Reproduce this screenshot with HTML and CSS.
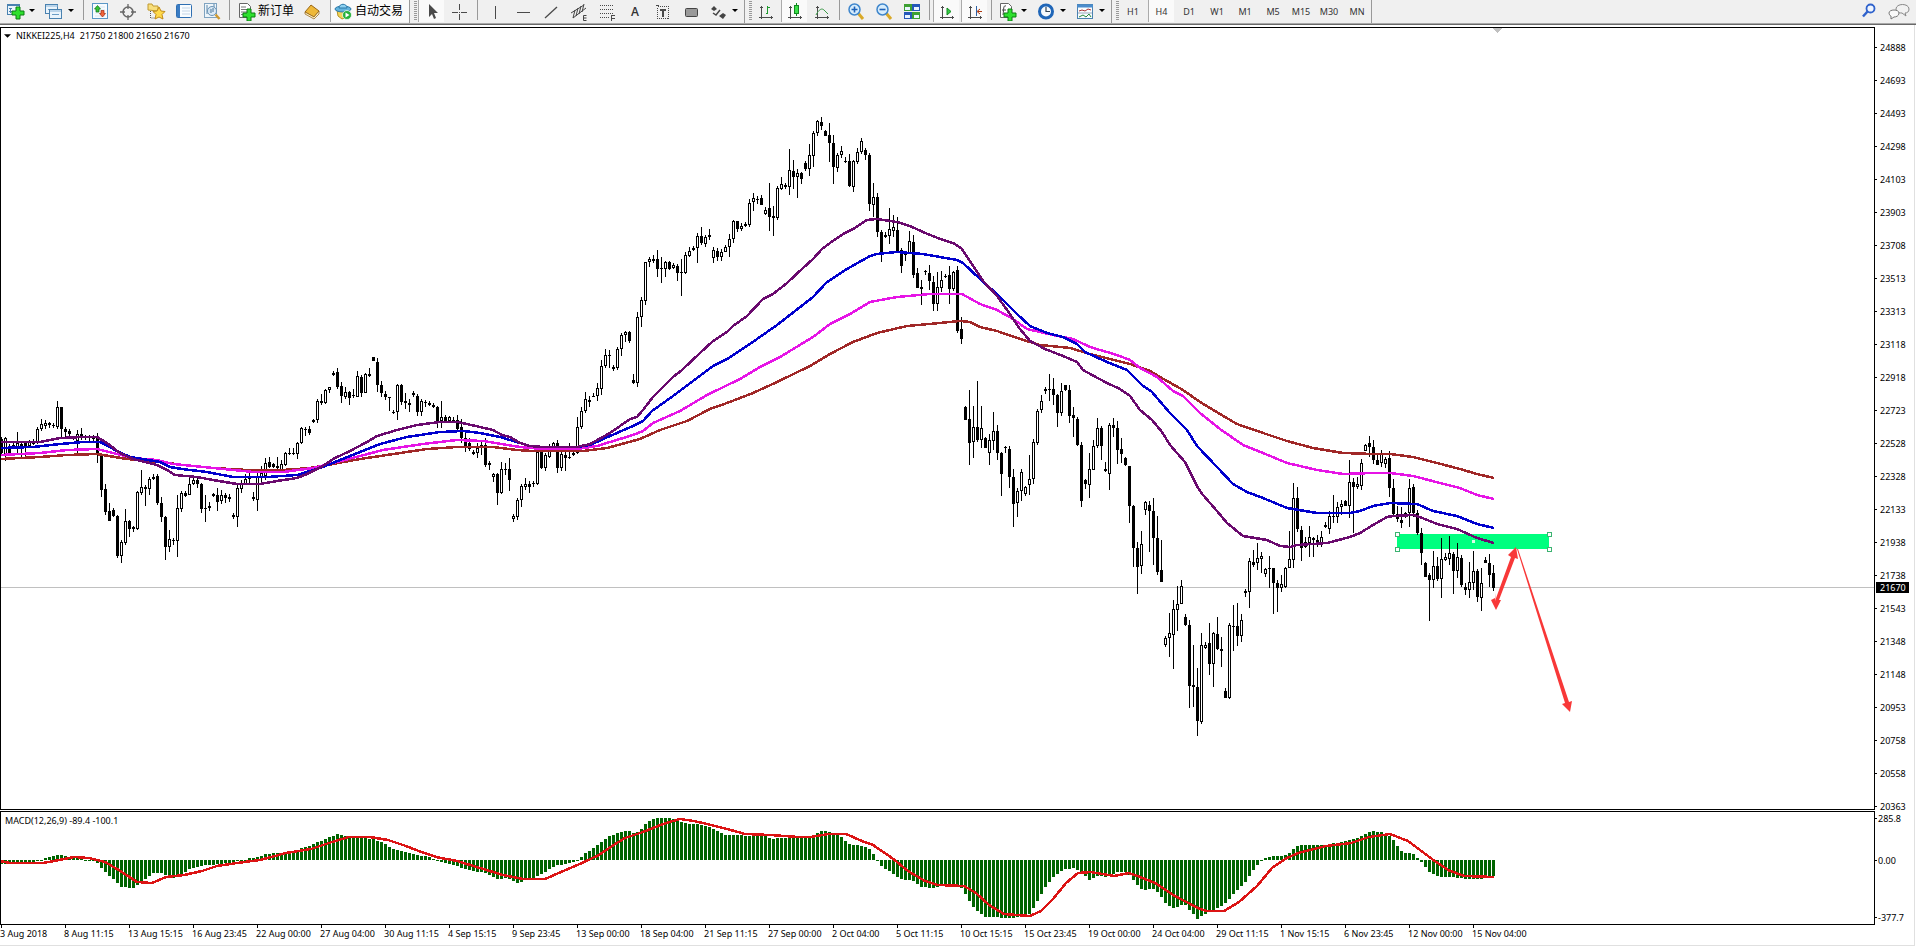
FILE: index.html
```html
<!DOCTYPE html>
<html lang="zh-CN">
<head>
  <meta charset="UTF-8" />
  <meta name="viewport" content="width=device-width, initial-scale=1.0" />
  <title>NIKKEI225,H4</title>
  <link rel="stylesheet" href="styles.css">
</head>
<body>
  <header class="toolbar">
    <div class="group">
      <button class="btn drop" aria-label="New chart">
        <svg class="icon" viewBox="0 0 20 20"><rect x="2.500" y="3.500" width="12" height="10" fill="#eaf4fc" stroke="#4a82b0"/><path d="M2 4.500h13" stroke="#4a82b0"/><path d="M5.500 7v5M4 10.500h4M4 7.500h3" stroke="#4a82b0" fill="none"/><path d="M11 6h4v4h4v4h-4v4h-4v-4H7v-4h4z" fill="#2ee02e" stroke="#0a7d12"/></svg>
        <svg class="caret" viewBox="0 0 12 6"><path d="M3 1h6L6 4z"/></svg>
      </button>
      <button class="btn drop" aria-label="Profiles">
        <svg class="icon" viewBox="0 0 20 20"><rect x="1.500" y="3.500" width="12" height="9" fill="#eaf4fc" stroke="#4a82b0"/><path d="M2 5h12" stroke="#8ab4d8"/><path d="M4 8.500h6" stroke="#6b9dc6"/><rect x="5.500" y="8.500" width="12" height="9" fill="#eaf4fc" stroke="#4a82b0"/><path d="M6 10h11" stroke="#8ab4d8"/><path d="M8 13.500h7" stroke="#6b9dc6"/></svg>
        <svg class="caret" viewBox="0 0 12 6"><path d="M3 1h6L6 4z"/></svg>
      </button>
      <span class="sep"></span>
      <button class="btn" aria-label="Market watch">
        <svg class="icon" viewBox="0 0 20 20"><rect x="2.500" y="2.500" width="15" height="15" fill="#f6fbff" stroke="#5b97c6"/><path d="M5 6h10M5 9h10M5 12h10M5 15h10" stroke="#dbe7f0"/><path d="M7.500 4.500l3 3.500H9v3H6V8H4.500z" fill="#35c435" stroke="#12711a" stroke-width=".7"/><path d="M12.500 16l-3-3.500H11v-3h3v3h1.500z" fill="#f0643a" stroke="#a02a10" stroke-width=".7"/></svg>
      </button>
      <button class="btn" aria-label="Data window">
        <svg class="icon" viewBox="0 0 20 20" fill="none" stroke="#666"><circle cx="10" cy="11" r="5" stroke-width="1.500"/><path d="M10 3v5M10 14v5M2 11h5M13 11h5" stroke-width="1.300"/></svg>
      </button>
      <button class="btn" aria-label="Navigator">
        <svg class="icon" viewBox="0 0 20 20"><path d="M2 9V3h4l1 2h5v5z" fill="#f8df7c" stroke="#c09a30"/><path d="M4.500 10v7h5" fill="none" stroke="#555" stroke-dasharray="1 1"/><path d="M13 6l2 4 4 .5-3 3 1 4.500-4-2-4 2 1-4.500-3-3 4-.5z" fill="#ffd94a" stroke="#c08a18"/></svg>
      </button>
      <button class="btn" aria-label="Terminal">
        <svg class="icon" viewBox="0 0 20 20"><rect x="2.500" y="3.500" width="15" height="13" rx="1" fill="#f8fcff" stroke="#2f6fb2"/><rect x="3" y="4" width="3" height="12" fill="#3a7cc4"/><path d="M8 7h8M8 10h8M8 13h8" stroke="#c4d5e6"/></svg>
      </button>
      <button class="btn" aria-label="Strategy tester">
        <svg class="icon" viewBox="0 0 20 20"><rect x="2.500" y="2.500" width="12" height="14" fill="#eef5fa" stroke="#7fa3c0"/><path d="M5 4v9M8 6v6M12 3v6" stroke="#5a87ab"/><circle cx="10" cy="10" r="4.500" fill="#d8eaf8" fill-opacity=".8" stroke="#6b93b5"/><path d="M9 8v4M11 7v4" stroke="#4a769a"/><path d="M13.500 13.500l4 4.500" stroke="#d09a30" stroke-width="2.500"/></svg>
      </button>
      <span class="sep"></span>
      <button class="btn labelled">
        <svg class="icon" viewBox="0 0 20 20"><path d="M3.500 2.500h8l3 3v11h-11z" fill="#fff" stroke="#666"/><path d="M5 6h5M5 8.500h7M5 11h7M5 13.500h5" stroke="#777"/><path d="M11 8h4v4h4v4h-4v4h-4v-4H7v-4h4z" fill="#2ee02e" stroke="#0a7d12"/></svg>
        <span>新订单</span>
      </button>
      <button class="btn" aria-label="MetaEditor">
        <svg class="icon" viewBox="0 0 20 20"><path d="M3 11l6-7 8 6-5 6z" fill="#eeb838" stroke="#9a6614"/><path d="M3 11l9 5 5-6v3l-5 5-9-5z" fill="#fff3c8" stroke="#8d5c10" stroke-width=".7"/></svg>
      </button>
      <button class="btn labelled auto on">
        <svg class="icon" viewBox="0 0 20 20"><path d="M4 9h12l-2 7-5 2-4-3z" fill="#f3d458" stroke="#b59324"/><ellipse cx="10" cy="8" rx="8" ry="3" fill="#63b4de" stroke="#2a78a8"/><path d="M6 7c0-5 8-5 8 0z" fill="#8cd0f0" stroke="#2a78a8"/><circle cx="14" cy="14" r="4.500" fill="#27b13a" stroke="#fff" stroke-width=".7"/><path d="M12.500 11.500v5l4-2.500z" fill="#fff"/></svg>
        <span>自动交易</span>
      </button>
    </div>

    <div class="group">
      <span class="grip"></span>
      <button class="btn on" aria-label="Cursor">
        <svg class="icon" viewBox="0 0 20 20"><path d="M7 3v13l3-3 2 5 2-1-2-5h4z" fill="#4a4a4a"/></svg>
      </button>
      <button class="btn" aria-label="Crosshair">
        <svg class="icon line" viewBox="0 0 20 20"><path d="M10.500 3v6M10.500 13v6M3 11.500h6M12 11.500h6M10 11.500h1"/></svg>
      </button>
      <span class="sep wide"></span>
      <button class="btn" aria-label="Vertical line"><svg class="icon line" viewBox="0 0 20 20"><path d="M10.500 5v13"/></svg></button>
      <button class="btn" aria-label="Horizontal line"><svg class="icon line" viewBox="0 0 20 20"><path d="M4 11.500h13"/></svg></button>
      <button class="btn" aria-label="Trendline"><svg class="icon" viewBox="0 0 20 20"><path d="M4 17L16 6" stroke="#4a4a4a" stroke-width="1.300"/></svg></button>
      <button class="btn" aria-label="Channel">
        <svg class="icon" viewBox="0 0 20 20" stroke="#444" fill="none"><path d="M2 12L15 4M4 17L17 7"/><path d="M6 9L4 17M9 7L7 15M12 5l-2 8M15 3l-2 8"/><path d="M17.500 14.500h-3v5h3M14.500 17h3"/></svg>
      </button>
      <button class="btn" aria-label="Fibonacci">
        <svg class="icon line" viewBox="0 0 20 20"><path d="M3 4.500h14M3 8.500h14M3 12.500h14M3 16.500h9" stroke-dasharray="1 1"/><path d="M17.500 14.500h-3v5M14.500 17h3"/></svg>
      </button>
      <button class="btn letter">A</button>
      <button class="btn" aria-label="Text label">
        <svg class="icon line" viewBox="0 0 20 20"><rect x="4.500" y="5.500" width="11" height="12" stroke-dasharray="1 1"/><path d="M7 9h6M10 9v7" stroke-width="2"/><path d="M3 4.500h3"/></svg>
      </button>
      <button class="btn" aria-label="Rectangle">
        <svg class="icon" viewBox="0 0 20 20"><rect x="4.500" y="7.500" width="12" height="8" rx="1" fill="#999" stroke="#444"/></svg>
      </button>
      <button class="btn drop" aria-label="Arrows">
        <svg class="icon" viewBox="0 0 20 20" fill="#444"><path d="M6 5l3 3-3 2-3-2zM15 12l3 2-3 4-4-3z"/><path d="M5 12l3 2 4-5" fill="none" stroke="#444" stroke-width="1.500"/></svg>
        <svg class="caret" viewBox="0 0 12 6"><path d="M3 1h6L6 4z"/></svg>
      </button>
    </div>

    <div class="group">
      <span class="grip"></span>
      <button class="btn" aria-label="Bar chart">
        <svg class="icon line" viewBox="0 0 20 20"><path d="M5.500 5v13M3 16.500h14M4 6.500h3M15 15v3"/><path d="M11.500 5v8M10 12.500h2M12 6.500h2" stroke="#1d9a2d"/></svg>
      </button>
      <button class="btn on" aria-label="Candlesticks">
        <svg class="icon line" viewBox="0 0 20 20"><path d="M5.500 5v13M3 16.500h14M4 6.500h3M15 15v3"/><path d="M11.500 2v13" stroke="#128a20"/><rect x="9.500" y="4.500" width="4" height="8" fill="#3ce04a" stroke="#128a20"/></svg>
      </button>
      <button class="btn" aria-label="Line chart">
        <svg class="icon line" viewBox="0 0 20 20"><path d="M5.500 5v13M3 16.500h14M4 6.500h3M15 15v3"/><path d="M4 14c3-6 6-7 8-5l4 4" stroke="#3d9a49" shape-rendering="auto"/></svg>
      </button>
      <span class="sep"></span>
      <button class="btn" aria-label="Zoom in">
        <svg class="icon" viewBox="0 0 20 20"><path d="M12 12l5 6" stroke="#d9a928" stroke-width="3"/><circle cx="8.500" cy="8.500" r="5.500" fill="#d7edfc" stroke="#3f86cc" stroke-width="1.500"/><path d="M8.500 5.500v6M5.500 8.500h6" stroke="#1e62b8" stroke-width="1.600"/></svg>
      </button>
      <button class="btn" aria-label="Zoom out">
        <svg class="icon" viewBox="0 0 20 20"><path d="M12 12l5 6" stroke="#d9a928" stroke-width="3"/><circle cx="8.500" cy="8.500" r="5.500" fill="#d7edfc" stroke="#3f86cc" stroke-width="1.500"/><path d="M5.500 8.500h6" stroke="#1e62b8" stroke-width="1.600"/></svg>
      </button>
      <button class="btn" aria-label="Tile windows">
        <svg class="icon" viewBox="0 0 20 20"><rect x="2" y="3" width="8" height="7" fill="#3d9f32"/><rect x="10" y="3" width="8" height="7" fill="#2457b8"/><rect x="2" y="11" width="8" height="7" fill="#2457b8"/><rect x="10" y="11" width="8" height="7" fill="#3d9f32"/><path d="M3 7.500h5M12 7.500h5M3 15.500h5M12 15.500h5" stroke="#e8f4ff" stroke-width="3"/></svg>
      </button>
      <span class="sep"></span>
      <button class="btn on" aria-label="Auto scroll">
        <svg class="icon line" viewBox="0 0 20 20"><path d="M5.500 5v13M3 16.500h14M4 6.500h3M15 15v3"/><path d="M10 7v7l4-3.500z" fill="#35cc44" stroke="#128a20" shape-rendering="auto"/></svg>
      </button>
      <button class="btn on" aria-label="Chart shift">
        <svg class="icon line" viewBox="0 0 20 20"><path d="M5.500 5v13M3 16.500h14M4 6.500h3M15 15v3"/><path d="M11.500 5v10" stroke="#2d62a8"/><path d="M17 10.500h-4M15 8l-3 2.500 3 2.500" stroke="#b03a10" shape-rendering="auto"/></svg>
      </button>
      <span class="sep"></span>
      <button class="btn drop" aria-label="Indicators">
        <svg class="icon" viewBox="0 0 20 20"><path d="M3.500 2.500h8l3 3v11h-11z" fill="#fff" stroke="#666"/><path d="M9 5c-3-1-2 3-3 9M5 9h4" fill="none" stroke="#444"/><path d="M11 8h4v4h4v4h-4v4h-4v-4H7v-4h4z" fill="#2ee02e" stroke="#0a7d12"/></svg>
        <svg class="caret" viewBox="0 0 12 6"><path d="M3 1h6L6 4z"/></svg>
      </button>
      <button class="btn drop" aria-label="Periods">
        <svg class="icon" viewBox="0 0 20 20"><circle cx="10" cy="10.500" r="6.500" fill="#f4f9fd" stroke="#1f66b8" stroke-width="3"/><path d="M10 6v4.500h4" fill="none" stroke="#345" stroke-width="1.200"/></svg>
        <svg class="caret" viewBox="0 0 12 6"><path d="M3 1h6L6 4z"/></svg>
      </button>
      <button class="btn drop" aria-label="Templates">
        <svg class="icon" viewBox="0 0 20 20"><rect x="2.500" y="3.500" width="15" height="14" fill="#f8fcff" stroke="#4a82b0"/><path d="M2 5h16" stroke="#4a8ccc" stroke-width="3"/><path d="M4 10l3-1 3 1 3-2 3 1" fill="none" stroke="#a33"/><path d="M3 12h14" stroke="#9ab"/><path d="M4 16l4-2 3 2 3-3 2 3" fill="none" stroke="#2b8a3a"/></svg>
        <svg class="caret" viewBox="0 0 12 6"><path d="M3 1h6L6 4z"/></svg>
      </button>
    </div>

    <div class="group">
      <span class="grip"></span>
      <button class="btn">H1</button>
      <button class="btn on">H4</button>
      <button class="btn">D1</button>
      <button class="btn">W1</button>
      <button class="btn">M1</button>
      <button class="btn">M5</button>
      <button class="btn">M15</button>
      <button class="btn">M30</button>
      <button class="btn">MN</button>
    </div>

    <div class="tools">
      <button class="btn" aria-label="Search">
        <svg class="icon" viewBox="0 0 20 20"><circle cx="11.500" cy="7.500" r="4" fill="#eef5ff" stroke="#2f62cc" stroke-width="1.800"/><path d="M8.500 10.500L4 15.500" stroke="#2f62cc" stroke-width="2.500"/></svg>
      </button>
      <button class="btn" aria-label="Chat">
        <svg class="icon chat" viewBox="0 0 24 20"><path d="M9 8c0-6 13-6 13 0 0 3-2 4-4 4l1 3-4-3c-4 0-6-1-6-4z" fill="#f2f2f2" stroke="#888"/><path d="M2 12c0-4 10-4 10 0 0 3-3 4-5 4l-3 2v-3c-1 0-2-2-2-3z" fill="#fafafa" stroke="#777"/></svg>
      </button>
    </div>
  </header>

  <main class="workspace">
    <section class="row price-row">
      <div class="pane">
        <svg id="price" class="plot" aria-label="NIKKEI225 H4"></svg>
        <div class="pane-title"><svg class="marker" viewBox="0 0 8 4"><path d="M0 0h8L4 4z"/></svg><span>NIKKEI225,H4</span><span>21750 21800 21650 21670</span></div>
      </div>
      <div class="axis">
        <ul class="scale">
          <li>24888</li><li>24693</li><li>24493</li><li>24298</li><li>24103</li><li>23903</li>
          <li>23708</li><li>23513</li><li>23313</li><li>23118</li><li>22918</li><li>22723</li>
          <li>22528</li><li>22328</li><li>22133</li><li>21938</li><li>21738</li><li>21543</li>
          <li>21348</li><li>21148</li><li>20953</li><li>20758</li><li>20558</li><li>20363</li>
        </ul>
        <span class="last-price">21670</span>
      </div>
    </section>
    <section class="row macd-row">
      <div class="pane">
        <svg id="macd" class="plot" aria-label="MACD"></svg>
        <div class="pane-title sub">MACD(12,26,9) -89.4 -100.1</div>
      </div>
      <div class="axis">
        <ul class="scale macd-scale"><li>285.8</li><li>0.00</li><li>-377.7</li></ul>
      </div>
    </section>
    <ul class="dates">
      <li>3 Aug 2018</li><li>8 Aug 11:15</li><li>13 Aug 15:15</li><li>16 Aug 23:45</li>
      <li>22 Aug 00:00</li><li>27 Aug 04:00</li><li>30 Aug 11:15</li><li>4 Sep 15:15</li>
      <li>9 Sep 23:45</li><li>13 Sep 00:00</li><li>18 Sep 04:00</li><li>21 Sep 11:15</li>
      <li>27 Sep 00:00</li><li>2 Oct 04:00</li><li>5 Oct 11:15</li><li>10 Oct 15:15</li>
      <li>15 Oct 23:45</li><li>19 Oct 00:00</li><li>24 Oct 04:00</li><li>29 Oct 11:15</li>
      <li>1 Nov 15:15</li><li>6 Nov 23:45</li><li>12 Nov 00:00</li><li>15 Nov 04:00</li>
    </ul>
  </main>
  <script src="chart.js"></script>
</body>
</html>
```

FILE: styles.css
```css
* {
  box-sizing: border-box;
}

body {
  margin: 0;
  height: 100vh;
  display: flex;
  flex-direction: column;
  overflow: hidden;
  background: #fff;
  color: #000;
  font-family: "Noto Sans", "Noto Sans CJK SC", sans-serif;
  font-size: 9px;
  line-height: 13px;
}

ul {
  margin: 0;
  padding: 0;
  list-style: none;
}

/* toolbar */
.toolbar {
  flex: none;
  display: flex;
  height: 25px;
  background: #f0f0f0;
  border-bottom: 1px solid #696969;
  box-shadow: inset 0 -1px #a8a8a8;
}

.group {
  display: flex;
  height: 23px;
  border-right: 1px solid #999;
}

.group:first-child {
  padding-left: 2px;
}

.btn {
  display: flex;
  align-items: center;
  justify-content: center;
  flex: none;
  width: 28px;
  height: 22px;
  margin: 0;
  padding: 0;
  border: 0;
  background: none;
  color: #333;
  font: inherit;
}

.btn.on {
  width: 26px;
  margin: 0 1px;
  background: #fafafa;
  border-left: 1px solid #aaa;
}

.btn.drop {
  width: 39px;
  gap: 1px;
  justify-content: flex-start;
  padding-left: 3px;
}

.btn.labelled {
  width: auto;
  gap: 2px;
  padding: 0 4px;
  color: #000;
  font-family: "Noto Sans CJK SC", sans-serif;
  font-size: 12px;
}

.btn.labelled span {
  padding-bottom: 4px;
}

.btn.auto {
  margin: 0 0 0 4px;
  padding: 0 6px 0 2px;
}

.btn.letter {
  font-family: "Open Sans", sans-serif;
  font-size: 12px;
  font-weight: 600;
}

.icon {
  flex: none;
  width: 20px;
  height: 20px;
}

.icon.chat {
  width: 24px;
}

.icon.line {
  fill: none;
  stroke: #4a4a4a;
  shape-rendering: crispEdges;
}

.caret {
  width: 12px;
  height: 6px;
}

.sep {
  width: 1px;
  height: 20px;
  margin: 0 2px 0 3px;
  background: #999;
}

.sep.wide {
  margin: 0 3px 0 4px;
}

.grip {
  width: 3px;
  height: 20px;
  margin: 1px 0 0 4px;
  background: repeating-linear-gradient(#999 0 1px, #f0f0f0 1px 2px);
}

.tools {
  display: flex;
  margin-left: auto;
  padding-right: 2px;
}

.tools .btn {
  width: 30px;
}

/* chart window */
.workspace {
  flex: 1;
  min-height: 0;
  display: flex;
  flex-direction: column;
  gap: 1px;
  margin: 0 1px 1px 0;
  padding-top: 2px;
  border-right: 1px solid #e0e0e0;
  border-bottom: 1px solid #e0e0e0;
}

.row {
  display: flex;
}

.price-row {
  flex: 1;
  min-height: 0;
}

.macd-row {
  flex: none;
  height: 114px;
}

.pane {
  position: relative;
  flex: 1;
  min-width: 0;
  border: 1px solid #000;
}

.plot {
  display: block;
  width: 100%;
  height: 100%;
  shape-rendering: crispEdges;
}

.pane-title {
  position: absolute;
  top: 1px;
  left: 3px;
  display: flex;
  gap: 5px;
}

.pane-title.sub {
  top: 2px;
  left: 4px;
}

.marker {
  width: 7px;
  height: 4px;
  margin-top: 5px;
}

.axis {
  position: relative;
  flex: none;
  width: 39px;
}

.scale {
  display: flex;
  flex-direction: column;
  gap: 20px;
  padding-top: 14px;
}

.scale li {
  display: flex;
  align-items: center;
  gap: 3px;
  height: 13px;
}

.scale li::before {
  content: "";
  width: 2px;
  height: 1px;
  background: #000;
}

.last-price {
  position: absolute;
  top: 555px;
  left: 1px;
  width: 33px;
  height: 11px;
  padding-left: 4px;
  background: #000;
  color: #fff;
  line-height: 11px;
}

.macd-scale {
  justify-content: space-between;
  gap: 0;
  height: 114px;
  padding: 1px 0;
}

.macd-scale li {
  gap: 1px;
}

.macd-scale li:nth-child(2) {
  margin-bottom: 16px;
}

.dates {
  flex: none;
  display: flex;
  height: 20px;
  margin-top: -1px;
  line-height: 11px;
}

.dates li {
  flex: none;
  width: 64px;
  white-space: nowrap;
}

.dates li::before {
  content: "";
  display: block;
  width: 1px;
  height: 3px;
  margin-left: 1px;
  background: #000;
}
```

FILE: chart.js
```js
// one candle per bar: high, body top, body bottom, low (w = up, b = down)
const candles = `
437,439,453,455b 437,438,455,461w 444,446,453,456b 443,445,448,449b 432,443,447,455w 442,444,446,457b
442,443,447,456b 440,442,446,448w 439,441,444,445b 427,429,443,444w 419,424,429,431w 420,423,426,429w
422,423,425,428w 423,425,426,428b 401,407,427,429w 407,407,429,437b 427,429,432,437b 429,431,434,438b
437,437,438,440b 430,434,441,455w 428,434,437,440b 435,436,438,440w 435,436,438,441b 435,437,439,442b
433,438,455,463b 455,455,490,497b 484,489,512,515b 503,511,521,521b 508,510,516,517b 515,516,556,558b
540,542,556,563w 509,521,543,545w 520,521,529,537b 526,527,529,532b 491,492,529,530w 470,487,493,495w
485,487,489,506b 477,479,489,495w 474,477,479,480w 474,476,503,505b 497,503,517,522b 516,517,547,560b
530,539,547,552w 538,540,540,545b 495,508,541,557w 491,493,509,512w 491,493,496,497b 475,484,495,495w
477,480,484,485w 478,480,484,488b 483,484,509,513b 495,508,509,522b 502,506,508,511w 493,494,496,497b
488,495,502,511b 490,495,501,504w 493,495,498,503b 494,497,499,502w 513,515,517,519b 484,488,517,527w
480,484,489,493w 474,479,484,485w 472,477,479,485w 492,497,499,501b 472,477,500,511w 466,473,477,483w
458,463,476,480w 457,462,467,468b 463,464,467,468b 457,466,468,471b 460,464,470,471w 452,453,465,466w
448,453,454,455b 448,453,454,455b 442,443,454,459w 427,428,443,444w 427,429,430,436b 426,429,433,435b
419,420,422,423b 399,401,420,423w 394,401,403,405b 389,390,403,404w 387,387,390,393w 371,373,375,376w
368,372,387,389b 382,386,396,403b 387,392,397,399w 391,392,398,405b 389,395,396,398b 371,376,397,397w
375,377,393,397b 373,374,393,393w 368,374,376,377b 357,357,361,361b 358,362,385,392b 381,385,393,397b
391,394,397,400b 397,397,398,411b 410,412,413,414b 384,385,412,420w 384,385,402,405b 393,401,403,409b
399,403,405,412b 391,393,395,397b 394,396,412,416b 399,401,412,416w 400,402,403,407b 401,403,405,406b
403,405,407,408b 406,407,421,428b 401,417,421,428w 415,417,421,423b 416,417,421,423w 417,420,422,423b
415,420,429,430b 419,427,438,443b 431,438,448,452b 438,443,449,451b 450,452,454,455b 443,448,453,458w
442,445,448,455w 438,445,465,467b 461,463,465,470w 473,474,477,482w 473,474,493,505b 462,469,493,494w
463,469,470,475b 458,469,480,491b 514,516,519,522w 498,500,517,520w 484,486,500,507w 478,484,487,490w
481,484,487,493b 481,483,484,487b 450,452,484,485w 448,452,468,469b 453,455,468,471w 444,448,457,458w
442,443,448,449w 440,443,468,473b 451,454,468,471w 450,455,458,471b 443,457,458,459b 451,453,455,456b
417,427,453,454w 407,411,427,429w 392,399,411,413w 396,400,402,407b 393,396,396,397b 383,388,396,401w
360,366,389,395w 349,355,366,368w 350,355,356,368b 365,367,369,371b 347,349,368,370w 333,335,349,356w
331,332,335,342w 331,332,341,343b 374,380,383,384b 312,317,383,387w 297,300,317,327w 262,262,301,305w
257,259,262,267w 255,259,261,263w 250,259,269,277b 257,268,269,283b 261,262,269,277w 261,262,269,270b
263,265,268,269w 264,266,273,281b 259,272,273,296b 252,255,273,274w 247,251,256,257w 246,248,250,251b
233,236,248,263w 227,236,243,245b 235,237,244,247w 229,235,237,240w 247,250,258,263w 248,251,257,261b
249,252,257,261w 245,247,252,252w 234,239,247,257w 220,221,239,243w 221,221,229,232b 223,226,229,231w
222,224,226,227b 199,203,225,227w 193,198,202,211w 196,199,200,204b 195,198,205,205b 207,210,214,215w
183,208,217,231b 206,216,218,236b 186,188,218,220w 177,184,189,190w 183,185,187,189b 149,170,187,195w
160,171,177,189b 169,173,177,198w 172,173,179,184b 161,163,169,171b 144,155,169,176w 131,133,156,167w
120,121,133,136w 117,122,126,130b 130,131,136,136b 123,135,143,162b 135,143,167,184b 153,155,168,172w
146,151,155,158w 157,161,162,163b 154,161,186,187b 160,161,187,192w 148,152,162,164w 138,141,152,154w
148,150,155,160b 153,155,204,211b 183,197,205,217w 193,197,232,237b 230,232,255,262b 232,235,237,238w
208,229,236,244w 215,227,231,237w 217,230,251,253b 248,250,266,273b 252,253,255,261b 231,241,253,254w
235,242,275,278b 268,273,288,288b 280,287,289,305b 270,271,272,275b 265,273,281,290b 276,282,304,311b
272,287,304,311w 271,280,288,292w 274,276,277,278b 266,275,289,304b 271,272,289,291w 266,270,331,333b
317,329,339,344b 406,407,420,420b 390,419,443,465b 406,427,442,458w 381,427,440,442b 406,428,440,448w
437,438,448,448b 434,440,453,465w 412,431,441,450w 425,431,453,460b 452,453,474,496b 446,447,448,453b
446,449,477,488b 469,477,504,527b 488,491,503,517w 469,472,491,501w 486,487,494,496w 455,479,485,495w
439,442,479,484w 409,411,443,445w 395,401,410,413w 387,389,391,394b 374,389,390,401b 378,389,395,405b
394,395,413,427b 383,391,413,416w 385,385,390,391b 385,390,416,423b 407,415,418,437b 417,419,445,446b
442,445,501,507b 479,480,484,489b 453,469,485,498w 440,446,470,470w 418,428,446,448w 426,428,446,460b
462,469,471,472b 423,425,474,490w 418,425,428,437b 421,428,450,464b 438,449,454,463b 457,458,465,466b
466,466,506,523b 505,506,548,567b 542,548,567,594b 531,544,566,574w 501,502,510,515w 501,505,511,552b
498,511,538,565b 516,538,572,575b 540,570,582,582b 636,638,645,647w 613,633,638,657w 600,609,635,669w
586,604,610,631w 580,586,604,604w 614,617,625,626b 620,625,686,708b 645,685,687,707b 668,687,721,736b
633,645,722,724w 642,645,648,649w 623,643,664,675b 632,633,664,687w 617,634,649,650b 637,649,651,667b
688,691,698,698b 623,625,698,699w 605,626,627,651b 603,626,636,646b 614,620,636,642w 589,591,593,597b
558,561,592,608w 550,562,565,567b 543,558,563,570w 552,556,559,573w 568,569,574,577w 556,568,569,588b
568,568,583,614b 580,583,588,612b 575,584,588,592w 567,568,587,588w 531,559,568,568w 483,498,560,568w
487,498,529,532b 526,530,548,561b 537,542,547,548w 526,537,543,557w 537,538,540,557b 535,540,543,547b
531,537,543,547w 522,525,527,528b 511,516,529,534w 495,516,517,523b 502,507,517,523w 500,504,507,515w
500,501,506,506b 460,482,506,518w 478,482,487,533b 477,484,487,489w 459,463,486,490w 444,445,451,451w
436,443,447,457b 440,447,460,464b 453,460,465,465b 450,454,463,467w 457,459,464,468w 451,458,488,497b
479,488,514,515b 506,514,519,522b 507,520,523,528b 512,513,517,518w 479,488,513,527w 484,487,513,517b
510,513,533,535b 528,533,553,565b 562,563,577,577b 573,575,580,621b 551,566,580,588w 557,566,579,581b
538,559,579,598w 553,557,560,561w 536,553,559,565w 552,554,571,594b 543,557,571,578w 555,558,585,587b
583,587,590,595b 562,582,590,598w 551,571,583,590w 569,571,597,602b 568,583,598,611w 557,560,563,563b
554,563,575,587b 565,573,588,591b`.trim().split(/\s+/);

// moving averages, slowest first
const averages = [
  ['#a02828', '0,459 40,457 67,455 97,454 127,459 160,462 183,465 213,468 247,470 283,470 310,468 333,464 360,459 387,455 427,449 457,447 493,447 517,450 533,451 583,451 607,448 640,439 660,430 687,421 710,409 727,403 753,393 777,382 810,366 830,354 853,342 877,333 907,326 940,323 960,321 970,322 980,327 997,331 1020,339 1040,345 1070,348 1090,354 1130,364 1150,371 1160,377 1183,390 1200,402 1220,414 1237,424 1263,433 1287,441 1313,448 1343,453 1373,454 1390,454 1413,457 1437,463 1460,469 1477,474 1494,478'],
  ['#e614e6', '0,455 40,453 67,450 97,449 117,454 133,458 157,460 173,464 213,468 253,472 283,472 313,468 333,463 360,456 383,450 423,444 457,440 483,441 520,447 543,449 577,449 597,446 633,435 643,431 653,423 680,411 707,395 740,379 760,367 780,357 813,337 830,324 850,314 870,302 897,297 930,294 962,294 980,304 997,310 1013,319 1027,329 1053,335 1073,339 1090,347 1117,355 1130,360 1140,368 1157,377 1173,391 1183,396 1200,413 1220,429 1243,445 1263,453 1287,463 1317,470 1343,474 1373,473 1390,473 1413,476 1440,483 1460,488 1477,495 1494,499'],
  ['#0000cd', '0,448 33,447 60,444 83,442 100,442 117,451 130,457 160,462 170,467 182,469 207,472 233,477 267,477 297,475 310,471 323,467 340,460 360,452 380,444 407,437 440,432 463,431 480,433 500,437 520,443 530,446 543,447 577,447 590,445 610,436 633,426 643,421 652,411 673,396 713,366 727,359 747,346 777,325 813,297 827,282 847,269 870,256 877,254 897,252 923,254 940,257 957,260 963,263 980,279 997,294 1017,314 1030,326 1047,333 1063,337 1077,344 1085,352 1107,362 1127,370 1143,386 1152,392 1170,413 1187,430 1197,446 1217,467 1233,484 1247,492 1263,498 1287,508 1317,513 1350,513 1360,511 1373,506 1390,503 1417,504 1433,511 1457,516 1477,524 1494,528'],
  ['#6a0a6e', '0,442 40,442 60,438 83,437 97,437 107,443 120,453 133,459 157,465 167,470 175,475 197,477 213,480 237,484 260,484 277,481 297,478 307,474 323,466 333,459 350,451 367,442 377,436 397,430 417,425 440,422 458,422 480,427 493,430 502,435 510,437 520,443 530,446 543,447 577,447 590,444 610,433 630,419 637,417 643,410 653,397 673,377 682,370 700,353 713,341 727,332 733,326 747,316 763,299 773,294 787,283 803,268 813,259 822,249 830,243 843,234 853,229 867,220 877,219 897,222 910,226 923,232 940,239 953,243 962,249 970,261 983,281 997,296 1010,314 1020,329 1030,341 1045,349 1063,356 1077,362 1083,370 1092,375 1107,383 1120,389 1130,396 1140,410 1152,420 1162,432 1170,445 1185,462 1197,486 1203,495 1217,511 1227,523 1243,536 1267,540 1280,546 1290,547 1297,545 1327,543 1350,537 1360,533 1373,525 1387,517 1393,516 1413,515 1420,517 1437,524 1457,529 1477,538 1494,543']
];

// histogram outline, bars are sampled from it every 4px
const histogram = '0,864 30,863 38,861 46,858 58,855 71,857 84,860 92,861 97,863 105,872 113,879 121,887 134,888 140,882 153,873 161,873 171,879 181,875 191,868 199,866 219,864 240,861 244,860 248,858 255,858 265,854 278,853 296,850 311,845 327,838 338,834 352,837 372,839 383,843 393,849 403,852 416,855 429,857 436,860 449,864 459,867 472,871 485,873 498,879 508,878 516,883 526,880 536,877 546,871 554,866 571,863 577,860 584,854 594,847 607,837 617,833 628,830 634,833 640,830 648,821 656,818 668,818 673,819 684,823 702,825 712,828 724,835 765,836 773,839 780,838 811,837 822,830 829,832 841,837 849,844 867,847 874,855 878,861 882,867 890,872 900,879 913,881 921,887 933,888 948,885 963,888 966,897 974,908 984,917 1015,918 1030,914 1038,899 1045,887 1053,877 1062,870 1073,868 1081,872 1089,880 1099,875 1107,877 1117,872 1127,872 1135,883 1142,890 1155,889 1165,903 1173,908 1184,904 1191,912 1197,919 1203,915 1224,904 1234,893 1244,883 1254,868 1261,861 1265,858 1271,856 1283,856 1290,853 1294,847 1298,845 1323,845 1346,841 1359,837 1370,831 1382,832 1390,836 1395,843 1402,852 1413,854 1420,861 1428,871 1438,877 1453,877 1466,879 1479,879 1494,876';
const signal = '0,861 10,863 43,863 54,861 74,857 89,858 105,862 117,869 128,876 137,882 152,883 166,877 184,875 202,871 217,866 237,863 260,860 286,853 311,849 332,842 349,837 370,837 388,840 406,846 416,850 436,857 457,861 480,868 503,875 523,879 545,879 561,872 582,863 599,855 612,846 625,838 643,832 663,824 680,819 694,821 707,824 727,829 745,834 770,835 798,837 811,837 828,834 846,834 862,841 873,845 892,858 908,871 925,881 938,885 964,886 976,893 989,905 1004,914 1030,916 1041,911 1053,899 1066,883 1078,873 1091,872 1114,876 1129,873 1140,877 1155,883 1173,895 1198,908 1206,911 1224,911 1239,902 1257,886 1272,868 1285,859 1298,853 1326,846 1351,843 1369,837 1390,834 1408,841 1420,850 1436,862 1448,870 1464,876 1494,877';

const STEP = 4;
const ZERO = 860;

function rect(x, y, w, h, fill) {
  return `<rect x="${x}" y="${y}" width="${w}" height="${h}" fill="${fill}"/>`;
}

function polyline(points, color) {
  return `<polyline points="${points}" fill="none" stroke="${color}" stroke-width="2.500" stroke-linejoin="round"/>`;
}

function drawCandles() {
  let out = '';
  candles.forEach((row, i) => {
    const [high, top, bottom, low] = row.slice(0, -1).split(',').map(Number);
    const x = 1 + i * STEP;
    out += rect(x, high, 1, Math.max(low - high, 1), '#000');
    out += rect(x - 1, top, 3, Math.max(bottom - top, 1), '#000');
    if (row.endsWith('w') && bottom - top > 2) {
      out += rect(x, top + 1, 1, bottom - top - 2, '#fff');
    }
  });
  return out;
}

function drawHistogram() {
  const pts = histogram.split(' ').map(p => p.split(',').map(Number));
  let out = '';
  let k = 0;
  for (let x = 1; x <= 1493; x += STEP) {
    while (pts[k + 1][0] < x) k++;
    const [x0, y0] = pts[k];
    const [x1, y1] = pts[k + 1];
    const y = Math.round(y0 + (y1 - y0) * (x - x0) / (x1 - x0));
    out += rect(x - 1, Math.min(y, ZERO), 3, Math.max(Math.abs(y - ZERO), 1), '#006400');
  }
  return out;
}

function drawZone() {
  let out = rect(1397, 534, 152, 15, '#00ff7f');
  [[1395, 533], [1547, 533], [1395, 548], [1547, 548]].forEach(([x, y]) => {
    out += `<rect x="${x + 0.5}" y="${y - 0.5}" width="4" height="4" fill="#fff" stroke="#3cb371"/>`;
  });
  return out + rect(1472, 540, 3, 3, '#d8ffe8');
}

function drawArrows() {
  return `<g fill="#f83838" shape-rendering="auto">
    <path d="M1495 601L1511 557L1508 555L1516 547L1518 559L1515 558L1499 600L1501 600L1496 610L1491 600L1495 598L1496 593Z"/>
    <path d="M1517 549L1518 549L1569 702L1572 701L1570 712L1562 704L1565 703Z"/>
  </g>`;
}

document.getElementById('price').innerHTML = `<g transform="translate(-1 -28)">
  ${rect(0, 587, 4000, 1, '#c0c0c0')}
  <path d="M1492 28h10l-5 5z" fill="#c0c0c0"/>
  ${drawZone()}
  ${drawCandles()}
  ${averages.map(([color, points]) => polyline(points, color)).join('')}
  ${drawArrows()}
</g>`;

document.getElementById('macd').innerHTML = `<g transform="translate(-1 -812)">
  ${drawHistogram()}
  ${polyline(signal, '#dc1414')}
</g>`;
```
